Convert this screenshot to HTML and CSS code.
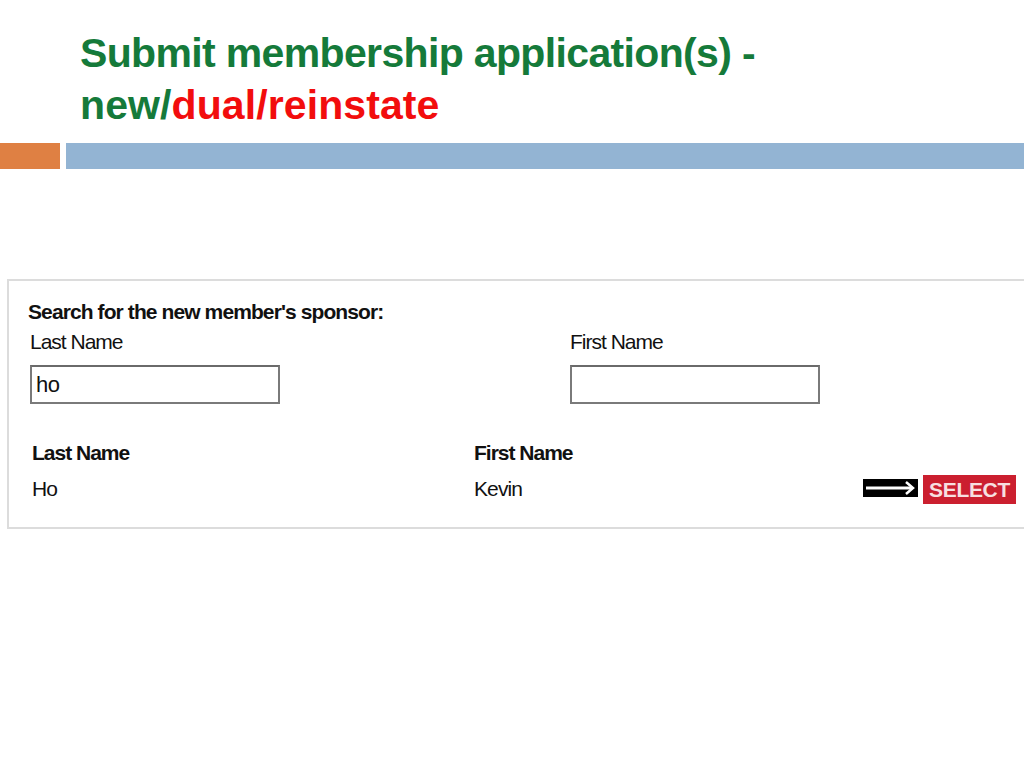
FILE: index.html
```html
<!DOCTYPE html>
<html lang="en">
<head>
    <meta charset="UTF-8">
    <title>Submit membership application(s)</title>
    <link rel="stylesheet" href="styles.css">
</head>
<body>
    <div class="slide-title">
        <h1>
            <span class="line line-1">Submit membership application(s) -</span>
            <span class="line line-2">new/<span class="red">dual/reinstate</span></span>
        </h1>
    </div>

    <!-- accent bar under the title -->
    <div class="accent-bar">
        <div class="accent-orange"></div>
        <div class="accent-blue"></div>
    </div>

    <div class="panel">
        <div class="panel-heading">Search for the new member's sponsor:</div>
        <div class="search-row">
            <div class="field field-last">
                <label>Last Name</label>
                <div class="text-box">ho</div>
            </div>
            <div class="field">
                <label>First Name</label>
                <div class="text-box"></div>
            </div>
        </div>

        <div class="results">
            <div class="col col-last">
                <div class="col-head">Last Name</div>
                <div class="col-value">Ho</div>
            </div>
            <div class="col col-first">
                <div class="col-head">First Name</div>
                <div class="col-value">Kevin</div>
            </div>
            <div class="col col-action">
                <span class="arrow">
                    <svg width="55" height="18" viewBox="0 0 55 18">
                        <rect width="55" height="18" fill="#000"/>
                        <path d="M3 9 H49" stroke="#fff" stroke-width="3"/>
                        <path d="M43 3 L50 9 L43 15" stroke="#fff" stroke-width="2.5" fill="none"/>
                    </svg>
                </span>
                <span class="select-btn">SELECT</span>
            </div>
        </div>
    </div>
</body>
</html>
```

FILE: styles.css
```css
body {
    margin: 0;
    padding: 0;
    background: #fff;
    font-family: "Liberation Sans", Arial, sans-serif;
    overflow: hidden;
}

.slide-title {
    padding: 27px 0 0 80px;
}

.slide-title h1 {
    margin: 0;
    font-size: 41px;
    line-height: 52px;
    color: #157a3a;
    font-weight: bold;
}

.slide-title .line {
    display: block;
}

.slide-title .line-1 {
    letter-spacing: -0.65px;
}

.slide-title .line-2 {
    letter-spacing: 0.1px;
}

.slide-title .red {
    color: #f20d0d;
}

.accent-bar {
    display: flex;
    margin-top: 12px;
    height: 26px;
}

.accent-orange {
    width: 60px;
    background: #df8043;
}

.accent-blue {
    flex: 1;
    margin-left: 6px;
    background: #93b4d3;
}

.panel {
    margin: 110px 0 0 7px;
    height: 246px;
    border: 2px solid #dcdcdc;
    border-right: none;
    padding: 0 0 0 19px;
    color: #111;
}

.panel-heading {
    font-weight: bold;
    font-size: 21px;
    margin-top: 19px;
    line-height: 24px;
    letter-spacing: -0.9px;
}

.search-row {
    display: flex;
    margin-left: 2px;
}

.field-last {
    width: 540px;
    flex-shrink: 0;
}

.field label {
    display: block;
    font-size: 21px;
    line-height: 24px;
    letter-spacing: -1px;
    margin: 6px 0 11px;
}

.text-box {
    width: 242px;
    height: 35px;
    border: 2px solid #7a7a7a;
    border-top-color: #6a6a6a;
    font-size: 22px;
    line-height: 36px;
    padding-left: 4px;
    letter-spacing: -0.5px;
}

.results {
    display: flex;
    margin-top: 37px;
    margin-left: 4px;
}

.col-last {
    width: 442px;
    flex-shrink: 0;
}

.col-first {
    width: 389px;
    flex-shrink: 0;
}

.col-head {
    font-weight: bold;
    font-size: 21px;
    line-height: 24px;
    letter-spacing: -1px;
}

.col-value {
    font-size: 21px;
    line-height: 24px;
    margin-top: 12px;
    letter-spacing: -0.9px;
}

.col-action {
    display: flex;
    align-items: center;
    margin-top: 33px;
    height: 30px;
}

.arrow {
    display: flex;
    margin-right: 5px;
    margin-top: -3px;
}

.select-btn {
    background: #cb1f2f;
    color: #f7dfe0;
    font-weight: bold;
    font-size: 21px;
    letter-spacing: -0.3px;
    width: 93px;
    height: 29px;
    line-height: 30px;
    text-align: center;
}
```
